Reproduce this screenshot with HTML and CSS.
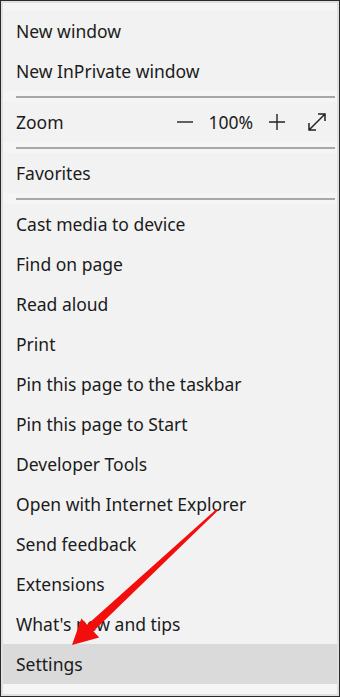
FILE: index.html
```html
<!DOCTYPE html>
<html lang="en">
<head>
  <meta charset="UTF-8">
  <meta name="viewport" content="width=device-width, initial-scale=1.0">
  <title>Menu</title>
  <link rel="stylesheet" href="styles.css">
</head>
<body>
  <div class="menu">
    <div class="item">New window</div>
    <div class="item">New InPrivate window</div>
    <div class="sep"></div>
    <div class="item zoom-row">
      <span>Zoom</span>
      <div class="zoom-ctrl">
        <svg class="ico" width="18" height="18" viewBox="0 0 18 18"><path d="M1 9h16" stroke="#222" stroke-width="1.4"/></svg>
        <span class="pct">100%</span>
        <svg class="ico" width="18" height="18" viewBox="0 0 18 18"><path d="M1 9h16M9 1v16" stroke="#222" stroke-width="1.4"/></svg>
        <svg class="ico" width="20" height="20" viewBox="0 0 20 20"><path d="M2 18L18 2M11 2h7v7M2 11v7h7" stroke="#222" stroke-width="1.5" fill="none"/></svg>
      </div>
    </div>
    <div class="sep"></div>
    <div class="item">Favorites</div>
    <div class="sep"></div>
    <div class="item">Cast media to device</div>
    <div class="item">Find on page</div>
    <div class="item">Read aloud</div>
    <div class="item">Print</div>
    <div class="item">Pin this page to the taskbar</div>
    <div class="item">Pin this page to Start</div>
    <div class="item">Developer Tools</div>
    <div class="item">Open with Internet Explorer</div>
    <div class="item">Send feedback</div>
    <div class="item">Extensions</div>
    <div class="item">What's new and tips</div>
    <div class="item active">Settings</div>
  </div>

  <!-- red annotation arrow drawn over the menu -->
  <svg class="arrow" width="340" height="697" viewBox="0 0 340 697">
    <polygon points="216.3,509.3 87.2,624.7 81.4,618.5 72,645 99.2,637.5 93.4,631.3 217.7,510.7" fill="#f40d0d"/>
  </svg>
</body>
</html>
```

FILE: styles.css
```css
body {
  margin: 0;
  font-family: "Noto Sans", "Open Sans", sans-serif;
  background-color: #f2f2f2;
}
.menu {
  width: 340px;
  height: 697px;
  box-sizing: border-box;
  border: 1px solid #2a2a2a;
  background-color: #f5f5f5;
  box-shadow: inset 0 0 0 2px #e0e0e0;
  padding: 10px 2px 0 2px;
  color: #1b1b1b;
}
.item {
  height: 40px;
  display: flex;
  align-items: center;
  padding-left: 13px;
  font-size: 17.5px;
  background-color: #f2f2f2;
}
.sep {
  height: 2px;
  background-color: #a8a8a8;
  margin: 5px 2px 4px 13px;
}
.zoom-row {
  justify-content: space-between;
  padding-right: 10px;
}
.zoom-ctrl {
  display: flex;
  align-items: center;
}
.ico {
  display: block;
}
.pct {
  margin: 0 15px 0 14px;
}
.zoom-ctrl .ico:last-child {
  margin-left: 21px;
}
.item.active {
  background-color: #dadada;
}
.arrow {
  position: absolute;
  left: 0;
  top: 0;
}
```
